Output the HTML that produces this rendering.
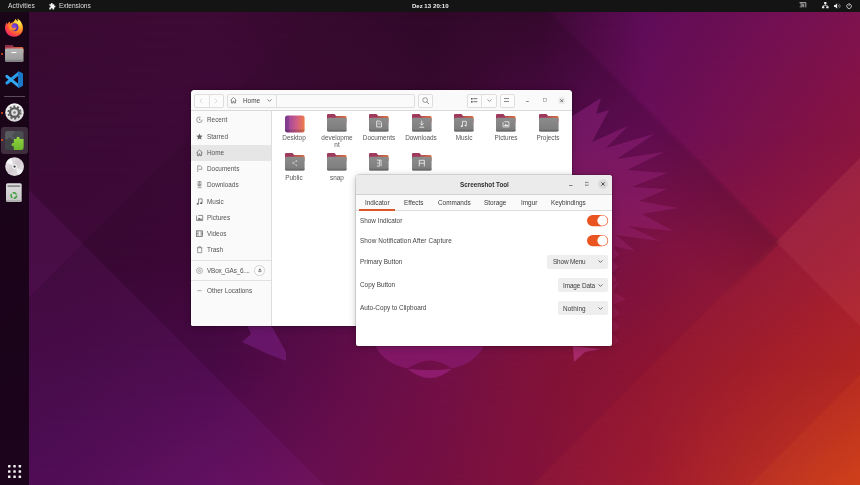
<!DOCTYPE html>
<html lang="en">
<head>
<meta charset="utf-8">
<title>Ubuntu Desktop - Screenshot Tool</title>
<style>
*{box-sizing:border-box;margin:0;padding:0}
html,body{width:860px;height:485px;overflow:hidden;background:#3b0a33}
body{position:relative;font-family:"Liberation Sans","DejaVu Sans",sans-serif;font-size:6.4px;color:#4a4a4a}
#wall{position:absolute;left:0;top:0;width:860px;height:485px}
.t{position:absolute;white-space:nowrap;line-height:8px;height:8px;will-change:transform;margin-top:.5px}
svg{display:block;position:absolute;overflow:visible}
/* top bar */
#topbar{position:absolute;left:0;top:0;width:860px;height:12px;background:#141414;color:#dcdcdc;font-size:6.6px}
/* dock */
#dock{position:absolute;left:0;top:12px;width:29px;height:473px;background:rgba(20,3,20,.88)}
.dot{position:absolute;left:1px;width:2px;height:2px;border-radius:50%;background:#e95420}
/* windows */
.win{position:absolute;background:#fff;border-radius:4px 4px 2px 2px;box-shadow:0 0 0 .5px rgba(0,0,0,.22),0 1px 7px rgba(0,0,0,.26);overflow:hidden}
#files{left:191px;top:90px;width:381px;height:236px}
#shot{left:356px;top:175px;width:256px;height:171px;background:#fff;border-radius:3px 3px 2px 2px}
.hb{position:absolute;left:0;top:0;right:0;background:#fafafa;border-bottom:.6px solid #dadada}
.btn{position:absolute;top:3.5px;height:14px;border:.6px solid #dedede;border-radius:2px;background:#fcfcfc}
.side{position:absolute;left:0;top:21px;width:81px;bottom:0;background:#fafafa;border-right:.6px solid #dedede}
.si{left:16.3px;color:#545454}
.lbl{will-change:transform;margin-top:.5px;position:absolute;width:42px;text-align:center;line-height:7px;color:#565656;font-size:6.4px}
.combo{position:absolute;height:14px;background:#eeeeee;border-radius:2px}
.sw{position:absolute;left:231px;width:21px;height:12px;border-radius:6px;background:#e95420}
.sw i{position:absolute;right:1px;top:1px;width:10px;height:10px;border-radius:50%;background:#fff;box-shadow:0 0 .5px rgba(0,0,0,.4)}
</style>
</head>
<body>
<svg id="wall" viewBox="0 0 860 485">
<defs>
<linearGradient id="r0" x1="0" y1="0" x2="860" y2="0" gradientUnits="userSpaceOnUse">
<stop offset="0.0000" stop-color="#3a0a32"/>
<stop offset="0.2500" stop-color="#3d0a35"/>
<stop offset="0.5000" stop-color="#300828"/>
<stop offset="0.6279" stop-color="#3a0931"/>
<stop offset="0.7500" stop-color="#5f0c58"/>
<stop offset="1.0000" stop-color="#7e1250"/>
</linearGradient>
<linearGradient id="r1" x1="0" y1="0" x2="860" y2="0" gradientUnits="userSpaceOnUse">
<stop offset="0.0000" stop-color="#3a0a34"/>
<stop offset="0.2500" stop-color="#3e0a38"/>
<stop offset="0.5000" stop-color="#38092f"/>
<stop offset="0.6279" stop-color="#480a42"/>
<stop offset="0.7500" stop-color="#6a0e58"/>
<stop offset="1.0000" stop-color="#88143f"/>
</linearGradient>
<linearGradient id="v1" x1="0" y1="12" x2="0" y2="135" gradientUnits="userSpaceOnUse"><stop offset="0" stop-color="#000"/><stop offset="1" stop-color="#fff"/></linearGradient>
<mask id="m1" maskUnits="userSpaceOnUse" x="0" y="0" width="860" height="485"><rect width="860" height="485" fill="url(#v1)"/></mask>
<linearGradient id="r2" x1="0" y1="0" x2="860" y2="0" gradientUnits="userSpaceOnUse">
<stop offset="0.0000" stop-color="#3d0938"/>
<stop offset="0.2500" stop-color="#400939"/>
<stop offset="0.5000" stop-color="#600d54"/>
<stop offset="0.6279" stop-color="#6e0f4c"/>
<stop offset="0.7500" stop-color="#7d1240"/>
<stop offset="1.0000" stop-color="#9c1a35"/>
</linearGradient>
<linearGradient id="v2" x1="0" y1="135" x2="0" y2="255" gradientUnits="userSpaceOnUse"><stop offset="0" stop-color="#000"/><stop offset="1" stop-color="#fff"/></linearGradient>
<mask id="m2" maskUnits="userSpaceOnUse" x="0" y="0" width="860" height="485"><rect width="860" height="485" fill="url(#v2)"/></mask>
<linearGradient id="r3" x1="0" y1="0" x2="860" y2="0" gradientUnits="userSpaceOnUse">
<stop offset="0.0000" stop-color="#440a46"/>
<stop offset="0.2500" stop-color="#4c0a4a"/>
<stop offset="0.5000" stop-color="#700f48"/>
<stop offset="0.6279" stop-color="#801238"/>
<stop offset="0.7500" stop-color="#8c1432"/>
<stop offset="1.0000" stop-color="#ac2222"/>
</linearGradient>
<linearGradient id="v3" x1="0" y1="255" x2="0" y2="365" gradientUnits="userSpaceOnUse"><stop offset="0" stop-color="#000"/><stop offset="1" stop-color="#fff"/></linearGradient>
<mask id="m3" maskUnits="userSpaceOnUse" x="0" y="0" width="860" height="485"><rect width="860" height="485" fill="url(#v3)"/></mask>
<linearGradient id="r4" x1="0" y1="0" x2="860" y2="0" gradientUnits="userSpaceOnUse">
<stop offset="0.0000" stop-color="#4e0b56"/>
<stop offset="0.2500" stop-color="#620e60"/>
<stop offset="0.5000" stop-color="#740f42"/>
<stop offset="0.6279" stop-color="#84123a"/>
<stop offset="0.7500" stop-color="#981730"/>
<stop offset="1.0000" stop-color="#c93a18"/>
</linearGradient>
<linearGradient id="v4" x1="0" y1="365" x2="0" y2="485" gradientUnits="userSpaceOnUse"><stop offset="0" stop-color="#000"/><stop offset="1" stop-color="#fff"/></linearGradient>
<mask id="m4" maskUnits="userSpaceOnUse" x="0" y="0" width="860" height="485"><rect width="860" height="485" fill="url(#v4)"/></mask>
</defs>
<rect width="860" height="485" fill="url(#r0)"/>
<rect width="860" height="485" fill="url(#r1)" mask="url(#m1)"/>
<rect width="860" height="485" fill="url(#r2)" mask="url(#m2)"/>
<rect width="860" height="485" fill="url(#r3)" mask="url(#m3)"/>
<rect width="860" height="485" fill="url(#r4)" mask="url(#m4)"/>
<!-- facets -->
<polygon points="0,161 324,485 0,485" fill="#9a30b0" opacity=".12"/>
<linearGradient id="fx" x1="60" y1="0" x2="380" y2="0" gradientUnits="userSpaceOnUse"><stop offset="0" stop-color="#12000f" stop-opacity=".14"/><stop offset="1" stop-color="#12000f" stop-opacity="0"/></linearGradient>
<polygon points="0,326 314,12 400,12 400,485 0,485" fill="url(#fx)"/>
<linearGradient id="sh1" x1="659" y1="115" x2="599" y2="175" gradientUnits="userSpaceOnUse"><stop offset="0" stop-color="#1a0018" stop-opacity="0"/><stop offset=".09" stop-color="#1a0018" stop-opacity=".17"/><stop offset=".5" stop-color="#1a0018" stop-opacity=".08"/><stop offset="1" stop-color="#1a0018" stop-opacity="0"/></linearGradient>
<polygon points="551,12 781,242 706,317 441,52 441,12" fill="url(#sh1)"/>
<polygon points="776,242 860,158 860,326" fill="#ff7a6a" opacity=".13"/>
<polygon points="533,485 776,242 860,326 860,485" fill="#ff5a3a" opacity=".055"/>
<polygon points="750,485 860,375 860,485" fill="#ff7a2a" opacity=".08"/>
<!-- mane right -->
<linearGradient id="mg" x1="0" y1="100" x2="0" y2="350" gradientUnits="userSpaceOnUse"><stop offset="0" stop-color="#8a1f7c" stop-opacity=".56"/><stop offset=".55" stop-color="#96206c" stop-opacity=".5"/><stop offset="1" stop-color="#a8265a" stop-opacity=".28"/></linearGradient>
<g fill="url(#mg)">
<polygon points="560,124 601,98 596,114 609,110 592,142 628,126 606,148 654,134 617,159 664,152 627,170 667,173 632,187 667,189 639,201 678,208 642,214 673,231 628,226 660,241 616,235 635,251 613,246 619,255 612,260 618,267 612,273 617,280 612,285 619,282 613,292 626,299 613,305 620,314 612,319 620,327 612,333 619,341 612,346 560,346"/>
<polygon points="573,346 601,349 585,352 574,362" fill="#b03078" opacity=".75"/>
<polygon points="247,325 271,325 286,352 286,361 268,354 242,342 251,334" fill="#8a259a" opacity=".42"/>
</g>
<!-- chin -->
<path d="M375.800,346.500V330H483.700V346.500C478,358 465,366 452,368.500Q441,361 430,360.500Q419,361 407.500,368.500C394,366 381,358 375.800,346.500Z" fill="#8a1b70" opacity=".72"/>
<path d="M407.400,368.800Q430,371.500 452,368.800Q430,387.200 407.400,368.800Z" fill="#941d76" opacity=".85"/>

</svg>

<div id="topbar">
<span class="t" style="left:7.5px;top:1.5px;letter-spacing:.1px">Activities</span>
<svg style="left:49.400px;top:2.600px" width="7.400" height="6.500" viewBox="0 0 14 12.4"><path fill="#f2f2f2" d="M5.2 0a1.7 1.7 0 0 1 1.6 2.2h3v3a1.8 1.8 0 1 1 0 3.4v3.8H6.9a1.8 1.8 0 1 0-3.4 0H.6V8.4a1.7 1.7 0 1 0 0-3.2V2.2h3A1.7 1.7 0 0 1 5.2 0z"/></svg>
<span class="t" style="left:58.8px;top:1.5px;letter-spacing:-.06px">Extensions</span>
<span class="t" style="left:411.6px;top:1.5px;font-weight:700;color:#f0f0f0;font-size:6px">Dez 13</span><span class="t" style="left:433.3px;top:1.5px;font-weight:700;color:#f0f0f0;font-size:6.1px">20:10</span>
<!-- tray -->
<svg style="left:799px;top:2.4px" width="7.400" height="5.500" viewBox="0 0 15 11"><g fill="none" stroke="#e2e2e2" stroke-width="1.500"><path d="M1 1.200H13.800V10.800M9.600 3.400V10.800"/><path d="M2.500 3.600H6.600V6.600H3.200M6.600 6.600V9.800H1.500" stroke-width="1.300"/></g></svg>
<svg style="left:821.5px;top:2.4px" width="6.6" height="6.4" viewBox="0 0 13 12.6"><g fill="#efefef"><rect x="4.2" y="0" width="4.6" height="4.2" rx=".6"/><rect x="0" y="8.2" width="4.6" height="4.2" rx=".6"/><rect x="8.4" y="8.2" width="4.6" height="4.2" rx=".6"/><path d="M5.9 4h1.2v2.2h4v2.2H9.9V7.4H3.1v1H1.9V6.2h4z"/></g></svg>
<svg style="left:833.8px;top:2.6px" width="6.6" height="6" viewBox="0 0 13 12"><path fill="#efefef" d="M0 4h2.6L6.2.6v10.8L2.6 8H0z"/><path fill="none" stroke="#9a9a9a" stroke-width="1.3" d="M8.4 3.4a3.6 3.6 0 0 1 0 5.2M10.4 1.6a6.2 6.2 0 0 1 0 8.8"/></svg>
<svg style="left:846px;top:2.5px" width="6.2" height="6.2" viewBox="0 0 12 12"><path fill="none" stroke="#ededed" stroke-width="1.5" stroke-linecap="round" d="M3.6 2.2a4.6 4.6 0 1 0 4.8 0M6 .8v4.4"/></svg>
</div>

<div id="dock">
<!-- coordinates relative to dock (top:12px) -->
<!-- firefox -->
<svg style="left:4.700px;top:5.800px" width="18.200" height="18.800" viewBox="0 0 36.400 37.600">
<defs>
<radialGradient id="ffo" cx=".78" cy=".18" r="1"><stop offset="0" stop-color="#fff05a"/><stop offset=".3" stop-color="#ffb82a"/><stop offset=".55" stop-color="#ff7a28"/><stop offset=".78" stop-color="#ff3d48"/><stop offset="1" stop-color="#d82878"/></radialGradient>
<radialGradient id="ffp" cx=".45" cy=".45" r=".6"><stop offset="0" stop-color="#8a54f0"/><stop offset="1" stop-color="#4a22a8"/></radialGradient>
</defs>
<path fill="url(#ffo)" d="M21 1.500c1 2.500 3 3.500 5 5.500-.2-2.200-.6-4-1.500-6 5.500 3 9 8 10.500 13 1.500 5 1.300 9.500-.5 13.500-3 6.500-9.500 10-16.500 10C8 37.500 0 29.500 0 20c0-4.500 1.500-8.500 4-11.500-.1 1.500.1 3 .6 4.200C5.800 10 7.800 8 10 7c-.5 1.500-.5 3 0 4.500 1.500-1.500 3.500-2.400 5.500-2.500 2.500-2 4.500-4.500 5.500-7.500z"/>
<circle cx="19" cy="18.500" r="7.800" fill="url(#ffp)"/>
<path fill="#ff8a2a" d="M8.500 14c2.500-2.500 6-3 8.500-1.800-2 .4-3.400 1.800-3.400 3.800 0 2.500 2 4.300 4.600 4.300 2.300 0 4-1.300 4.600-3.300.8 4.200-2.500 8.500-7.500 8.500-5.500 0-9-5.500-7.300-11.500z" opacity=".92"/>
</svg>
<!-- files -->
<div class="dot" style="top:40.5px"></div>
<svg style="left:4.800px;top:32.800px" width="18.500" height="16.800" viewBox="0 0 39.2 35.2">
<defs><linearGradient id="dfb" x1="0" y1="0" x2="0" y2="1"><stop offset="0" stop-color="#b4b4b4"/><stop offset="1" stop-color="#9a9a9a"/></linearGradient>
<linearGradient id="dft" x1="0" y1="0" x2="1" y2="0"><stop offset="0" stop-color="#a83a56"/><stop offset="1" stop-color="#e0683a"/></linearGradient></defs>
<path fill="url(#dft)" d="M3 0h12l4 4h17a3 3 0 0 1 3 3v10H0V3a3 3 0 0 1 3-3z"/>
<path fill="#8e2e4e" d="M3 0h12l3 4H0V3a3 3 0 0 1 3-3z"/>
<rect x="0" y="7" width="39.2" height="28.2" rx="3" fill="url(#dfb)"/>
<rect x="0" y="31" width="39.2" height="4.2" rx="2" fill="#858585"/>
<rect x="13.500" y="14.500" width="11" height="2.200" rx="1.100" fill="#fff"/>
</svg>
<!-- vscode -->
<svg style="left:4.700px;top:59.300px" width="18" height="17.300" viewBox="0 0 38 36">
<path d="M28.500 5L4 25" stroke="#2a9cea" stroke-width="6.400" stroke-linecap="round"/>
<path d="M28.500 31L4 11" stroke="#33a9f2" stroke-width="6.400" stroke-linecap="round"/>
<path fill="#1b79c9" d="M27.500 0l9 4.200a2.500 2.500 0 0 1 1.500 2.300v23a2.500 2.500 0 0 1-1.500 2.300l-9 4.200z"/>
</svg>
<!-- separator -->
<div style="position:absolute;left:4px;top:83.600px;width:20.500px;height:.7px;background:#5a4a5c"></div>
<!-- settings -->
<div class="dot" style="top:99.900px"></div>
<svg style="left:4.700px;top:91.400px" width="19" height="19" viewBox="0 0 38 38">
<defs><linearGradient id="sgb" x1="0" y1="0" x2="0" y2="1"><stop offset="0" stop-color="#f6f6f6"/><stop offset="1" stop-color="#d6d6d6"/></linearGradient></defs>
<circle cx="19" cy="19" r="18.600" fill="url(#sgb)"/>
<circle cx="19" cy="19" r="12.600" fill="none" stroke="#5c5c5c" stroke-width="3" stroke-dasharray="4.200 3.716"/>
<circle cx="19" cy="19" r="11.200" fill="#5c5c5c"/>
<circle cx="19" cy="19" r="6.600" fill="#dedede"/>
<circle cx="19" cy="19" r="2.700" fill="#7a7a7a"/>
</svg>
<!-- extensions (active) -->
<div style="position:absolute;left:1.100px;top:114.600px;width:26.500px;height:27.200px;border-radius:3px;background:rgba(255,255,255,.17)"></div>
<div class="dot" style="top:126.800px"></div>
<svg style="left:5.100px;top:118.600px" width="18.800" height="19" viewBox="0 0 36.400 37.600">
<defs><linearGradient id="exg" x1="0" y1="0" x2="0" y2="1"><stop offset="0" stop-color="#93d440"/><stop offset="1" stop-color="#6cb52c"/></linearGradient></defs>
<rect x="0" y="0" width="36.400" height="37.600" rx="4.500" fill="#4a4d51"/>
<path fill="#585b5f" d="M0 4.500A4.500 4.500 0 0 1 4.500 0H18v6a3.200 3.200 0 1 0 0 6v5H0z"/>
<path fill="#404346" d="M0 17h6a3.200 3.200 0 1 1 6 0h5v20.600H4.500A4.500 4.500 0 0 1 0 33.100z"/>
<path fill="url(#exg)" d="M17 16h5.300a3.400 3.400 0 1 1 6.400 0h7.700v17.100a4.500 4.500 0 0 1-4.500 4.500H17v-7.400a3.400 3.400 0 1 1 0-6.400z"/>
</svg>
<!-- disc -->
<svg style="left:4.500px;top:144.500px" width="19.200" height="19.200" viewBox="0 0 38 38">
<defs><linearGradient id="cdg" x1="0" y1="0" x2="1" y2="1"><stop offset="0" stop-color="#f4f2f4"/><stop offset=".5" stop-color="#d2ccd0"/><stop offset="1" stop-color="#ece8ec"/></linearGradient></defs>
<circle cx="19" cy="19" r="18.600" fill="url(#cdg)"/>
<path d="M19 19L2.500 11A18.600 18.600 0 0 1 11 2.200z" fill="#fff" opacity=".75"/>
<path d="M19 19l16.500 8a18.600 18.600 0 0 1-8.500 8.800z" fill="#fff" opacity=".55"/>
<circle cx="19" cy="19" r="5.600" fill="#f4f4f4" stroke="#c0bcc0" stroke-width=".8"/>
<circle cx="19" cy="19" r="2.300" fill="#3a3a3a"/>
</svg>
<!-- trash -->
<svg style="left:6.200px;top:170.800px" width="15.700" height="19.200" viewBox="0 0 32 38">
<defs><linearGradient id="trg" x1="0" y1="0" x2="0" y2="1"><stop offset="0" stop-color="#dedede"/><stop offset="1" stop-color="#c6c6c6"/></linearGradient></defs>
<rect x="0" y="0" width="32" height="38" rx="3.200" fill="url(#trg)"/>
<rect x="3" y="3.800" width="26" height="3.800" rx=".8" fill="#8c8c8c"/>
<path d="M0 34h32v.8a3.200 3.200 0 0 1-3.200 3.200H3.200A3.200 3.200 0 0 1 0 34.800z" fill="#b0b0b0"/>
<circle cx="16" cy="25" r="5.600" fill="none" stroke="#3a9e3a" stroke-width="3" stroke-dasharray="8.700 3"/>
<circle cx="16" cy="25" r="2.600" fill="#d2d2d2"/>
</svg>
<!-- show apps -->
<svg style="left:7.700px;top:453.100px" width="13.200" height="13.200" viewBox="0 0 13.200 13.200"><g fill="#f4f4f4">
<rect x="0" y="0" width="2.500" height="2.500" rx=".4"/><rect x="5.300" y="0" width="2.500" height="2.500" rx=".4"/><rect x="10.600" y="0" width="2.500" height="2.500" rx=".4"/>
<rect x="0" y="5.300" width="2.500" height="2.500" rx=".4"/><rect x="5.300" y="5.300" width="2.500" height="2.500" rx=".4"/><rect x="10.600" y="5.300" width="2.500" height="2.500" rx=".4"/>
<rect x="0" y="10.600" width="2.500" height="2.500" rx=".4"/><rect x="5.300" y="10.600" width="2.500" height="2.500" rx=".4"/><rect x="10.600" y="10.600" width="2.500" height="2.500" rx=".4"/>
</g></svg>

</div>

<div class="win" id="files">
<div class="hb" style="height:21px"></div>
<div class="btn" style="left:3px;width:30px"></div>
<div style="position:absolute;left:17.700px;top:3.500px;width:.6px;height:14px;background:#e0e0e0"></div>
<svg style="left:8px;top:7.500px" width="4" height="6" viewBox="0 0 4 6"><path d="M3.200 .6L.9 3l2.300 2.400" fill="none" stroke="#cfcfcf" stroke-width=".8"/></svg>
<svg style="left:23px;top:7.500px" width="4" height="6" viewBox="0 0 4 6"><path d="M.8 .6L3.100 3 .8 5.400" fill="none" stroke="#cfcfcf" stroke-width=".8"/></svg>
<div class="btn" style="left:36px;width:187.500px;background:#fafafa"></div>
<div style="position:absolute;left:85px;top:3.500px;width:.6px;height:14px;background:#e0e0e0"></div>
<svg style="left:39px;top:7px" width="7" height="6.500" viewBox="0 0 14 13"><path d="M1 6.500L7 1l6 5.500M3 5.500V12h3V8.500h2V12h3V5.500" fill="none" stroke="#5a5a5a" stroke-width="1.300" stroke-linejoin="round"/></svg>
<span class="t" style="left:52.300px;top:6.300px;color:#454545">Home</span>
<svg style="left:75.500px;top:9px" width="5" height="3" viewBox="0 0 5 3"><path d="M.5 .4L2.500 2.400 4.500 .4" fill="none" stroke="#6a6a6a" stroke-width=".8"/></svg>
<div class="btn" style="left:227px;width:15px"></div>
<svg style="left:230.800px;top:6.800px" width="7.400" height="7.400" viewBox="0 0 12.800 12.800"><circle cx="5.400" cy="5.400" r="4.100" fill="none" stroke="#6a6a6a" stroke-width="1.150"/><path d="M8.400 8.400l3.400 3.400" stroke="#6a6a6a" stroke-width="1.400" stroke-linecap="round"/></svg>
<div class="btn" style="left:275.700px;width:30px"></div>
<div style="position:absolute;left:290.400px;top:3.500px;width:.6px;height:14px;background:#e0e0e0"></div>
<svg style="left:279.800px;top:7.700px" width="6.400" height="5.400" viewBox="0 0 12.800 10.800"><g fill="#5c5c5c"><rect x="0" y="0" width="3.200" height="3.200"/><rect x="0" y="6" width="3.200" height="3.200"/><rect x="4.600" y=".6" width="8.200" height="1.700"/><rect x="4.600" y="6.600" width="8.200" height="1.700"/></g></svg>
<svg style="left:295.500px;top:9px" width="5" height="3" viewBox="0 0 5 3"><path d="M.5 .4L2.500 2.400 4.500 .4" fill="none" stroke="#7a7a7a" stroke-width=".8"/></svg>
<div class="btn" style="left:308.500px;width:15px"></div>
<svg style="left:313.400px;top:8.100px" width="5" height="5" viewBox="0 0 5 5"><g fill="#636363"><rect x="0" y=".3" width="5" height=".75"/><rect x="0" y="3.100" width="5" height=".75"/></g></svg>
<svg style="left:335.200px;top:11px" width="2.800" height=".9" viewBox="0 0 2.800 .9"><rect width="2.800" height=".8" fill="#727272"/></svg>
<svg style="left:351.900px;top:8.200px" width="3.600" height="3.600" viewBox="0 0 3.600 3.600"><rect x=".3" y=".3" width="3" height="3" fill="none" stroke="#8e8e8e" stroke-width=".55"/></svg>
<div style="position:absolute;left:366.900px;top:6.600px;width:7.400px;height:7.400px;border-radius:50%;background:#ebebeb"></div>
<svg style="left:368.900px;top:8.600px" width="3.400" height="3.400" viewBox="0 0 3.400 3.400"><path d="M.3 .3l2.800 2.800M3.100 .3L.3 3.100" stroke="#4a4a4a" stroke-width=".75"/></svg>
<div class="side"></div>
<div style="position:absolute;left:0;top:54.500px;width:80.400px;height:16px;background:#e6e6e6"></div>
<svg style="left:5.100px;top:26.30px" width="7.300" height="7.300" viewBox="0 0 12.600 12.600"><circle cx="6" cy="6.500" r="4.800" fill="none" stroke="#666" stroke-width="1.100" stroke-dasharray="24 6"/><path d="M6 4v2.800h2.200" fill="none" stroke="#666" stroke-width="1"/></svg>
<span class="t si" style="top:25.90px">Recent</span>
<svg style="left:5.100px;top:42.55px" width="7.300" height="7.300" viewBox="0 0 12.600 12.600"><path d="M6 .8l1.600 3.600 3.900.4-2.900 2.600.8 3.900L6 9.300 2.600 11.300l.8-3.900L.5 4.800l3.900-.4z" fill="#6a6a6a"/></svg>
<span class="t si" style="top:42.15px">Starred</span>
<svg style="left:5.100px;top:58.80px" width="7.300" height="7.300" viewBox="0 0 12.600 12.600"><path d="M.8 6.500L6 1.500l5.200 5M2.500 5.500V11.500h2.700V8.300h1.600v3.200h2.700V5.500" fill="none" stroke="#555" stroke-width="1.150" stroke-linejoin="round"/></svg>
<span class="t si" style="top:58.40px">Home</span>
<svg style="left:5.100px;top:75.05px" width="7.300" height="7.300" viewBox="0 0 12.600 12.600"><path d="M3 12V1.500h4.500l2.500 2.300v3.700H5" fill="none" stroke="#666" stroke-width="1.100"/></svg>
<span class="t si" style="top:74.65px">Documents</span>
<svg style="left:5.100px;top:91.30px" width="7.300" height="7.300" viewBox="0 0 12.600 12.600"><path d="M6 1v7M3.500 5.500L6 8.200l2.500-2.700M3.500 1h5v7.500h-5zM2.500 11.500h7" fill="none" stroke="#666" stroke-width="1.050"/></svg>
<span class="t si" style="top:90.90px">Downloads</span>
<svg style="left:5.100px;top:107.55px" width="7.300" height="7.300" viewBox="0 0 12.600 12.600"><path d="M4.500 9.500V1.500h6v7" fill="none" stroke="#555" stroke-width="1.150"/><ellipse cx="3" cy="10" rx="1.900" ry="1.500" fill="#555"/><ellipse cx="9" cy="9" rx="1.900" ry="1.500" fill="#555"/></svg>
<span class="t si" style="top:107.15px">Music</span>
<svg style="left:5.100px;top:123.80px" width="7.300" height="7.300" viewBox="0 0 12.600 12.600"><path d="M1 11.300V2.500M1 11.300h10.500V2.500H4" fill="none" stroke="#5a5a5a" stroke-width="1.150"/><path d="M2.500 10l2.800-4 2.200 2.600 1.300-1.200 2 2.600z" fill="#5a5a5a"/></svg>
<span class="t si" style="top:123.40px">Pictures</span>
<svg style="left:5.100px;top:140.05px" width="7.300" height="7.300" viewBox="0 0 12.600 12.600"><rect x="1" y="1.500" width="10.500" height="9.500" fill="none" stroke="#555" stroke-width="1.150"/><path d="M3.600 1.500v9.500M8.900 1.500v9.500M1 6.200h2.600M8.900 6.200h2.600" stroke="#555" stroke-width="1"/></svg>
<span class="t si" style="top:139.65px">Videos</span>
<svg style="left:5.100px;top:156.30px" width="7.300" height="7.300" viewBox="0 0 12.600 12.600"><path d="M1.500 3h9.500M4.500 3V1.300h3.500V3M2.800 3.300v8.200h7V3.300" fill="none" stroke="#666" stroke-width="1.100"/></svg>
<span class="t si" style="top:155.90px">Trash</span>
<svg style="left:5.100px;top:176.80px" width="7.300" height="7.300" viewBox="0 0 12.600 12.600"><circle cx="6" cy="6.300" r="5" fill="none" stroke="#777" stroke-width="1"/><circle cx="6" cy="6.300" r="1.700" fill="none" stroke="#777" stroke-width="1"/></svg>
<span class="t si" style="top:176.40px;letter-spacing:-.2px">VBox_GAs_6....</span>
<svg style="left:5.100px;top:196.80px" width="7.300" height="7.300" viewBox="0 0 12.600 12.600"><path d="M2.500 6.300h7" stroke="#7a7a7a" stroke-width="1.100"/></svg>
<span class="t si" style="top:196.40px">Other Locations</span>
<div style="position:absolute;left:0;top:169.700px;width:80.400px;height:.6px;background:#e2e2e2"></div>
<div style="position:absolute;left:0;top:189.700px;width:80.400px;height:.6px;background:#e2e2e2"></div>
<div style="position:absolute;left:63.200px;top:175.200px;width:10.600px;height:10.600px;border-radius:50%;border:.6px solid #d2d2d2;background:#fcfcfc"></div>
<svg style="left:66.600px;top:178.200px" width="3.800" height="4.400" viewBox="0 0 3.800 4.400"><path d="M1.900 .3L3.500 2.600H.3z" fill="#6a6a6a"/><rect x=".3" y="3.300" width="3.200" height=".8" fill="#6a6a6a"/></svg>
<svg width="0" height="0" style="left:0;top:0"><defs><linearGradient id="fb" x1="0" y1="0" x2="0" y2="1"><stop offset="0" stop-color="#8c8c8c"/><stop offset="1" stop-color="#7c7c7c"/></linearGradient><linearGradient id="ft" x1="0" y1="0" x2="1" y2="0"><stop offset="0" stop-color="#a03a5c"/><stop offset=".45" stop-color="#b44e50"/><stop offset="1" stop-color="#de6a3a"/></linearGradient><linearGradient id="dk" x1="0" y1="0" x2="1" y2="0"><stop offset="0" stop-color="#7d3a8c"/><stop offset=".22" stop-color="#8c3f90"/><stop offset=".23" stop-color="#a64a98"/><stop offset=".6" stop-color="#d05e84"/><stop offset="1" stop-color="#ee7a4a"/></linearGradient><g id="fold"><path fill="url(#ft)" d="M3 0h11.500l3.500 3.800h18.200a3 3 0 0 1 3 3V16H0V3a3 3 0 0 1 3-3z"/><path fill="#a03a5c" d="M3 0h11.500l3 3.800V8H0V3a3 3 0 0 1 3-3z"/><rect x="0" y="7.600" width="39.200" height="27.400" rx="3" fill="url(#fb)"/><path d="M0 31.500h39.200V32a3 3 0 0 1-3 3H3a3 3 0 0 1-3-3z" fill="#6c6c6c"/></g></defs></svg>
<svg style="left:93.50px;top:24.70px" width="19.600" height="17.500" viewBox="0 0 39.200 35"><rect x="0" y="1" width="39.200" height="34" rx="5" fill="url(#dk)"/><path d="M0 29h39.200v1a5 5 0 0 1-5 5H5a5 5 0 0 1-5-5z" fill="#000" opacity=".14"/></svg>
<div class="lbl t2" style="left:82.30px;top:43.70px">Desktop</div>
<svg style="left:135.90px;top:24.00px" width="19.600" height="17.500" viewBox="0 0 39.200 35"><use href="#fold"/><g transform="translate(19.600 20.500) scale(.84) translate(-19.600 -20.500)" opacity=".88"></g></svg>
<div class="lbl t2" style="left:124.70px;top:43.70px">developme<br>nt</div>
<svg style="left:178.20px;top:24.00px" width="19.600" height="17.500" viewBox="0 0 39.200 35"><use href="#fold"/><g transform="translate(19.600 20.500) scale(.84) translate(-19.600 -20.500)" opacity=".88"><path d="M14.500 13h8l3.500 3.500V27h-11.500z" fill="none" stroke="#fff" stroke-width="2"/><path d="M17 19.500h6.500" stroke="#fff" stroke-width="1.800"/></g></svg>
<div class="lbl t2" style="left:167.00px;top:43.70px">Documents</div>
<svg style="left:220.50px;top:24.00px" width="19.600" height="17.500" viewBox="0 0 39.200 35"><use href="#fold"/><g transform="translate(19.600 20.500) scale(.84) translate(-19.600 -20.500)" opacity=".88"><path d="M19.600 12v10M15.500 18.500l4.100 4.200 4.100-4.200M14 27.500h11.200" fill="none" stroke="#fff" stroke-width="2.100"/></g></svg>
<div class="lbl t2" style="left:209.30px;top:43.70px">Downloads</div>
<svg style="left:262.90px;top:24.00px" width="19.600" height="17.500" viewBox="0 0 39.200 35"><use href="#fold"/><g transform="translate(19.600 20.500) scale(.84) translate(-19.600 -20.500)" opacity=".88"><path d="M16.500 24.500V13.500h9v9.500" fill="none" stroke="#fff" stroke-width="2"/><ellipse cx="14.800" cy="25" rx="2.500" ry="2" fill="#fff"/><ellipse cx="23.800" cy="23.500" rx="2.500" ry="2" fill="#fff"/></g></svg>
<div class="lbl t2" style="left:251.70px;top:43.70px">Music</div>
<svg style="left:305.20px;top:24.00px" width="19.600" height="17.500" viewBox="0 0 39.200 35"><use href="#fold"/><g transform="translate(19.600 20.500) scale(.84) translate(-19.600 -20.500)" opacity=".88"><path d="M13 15.500v11.300h14V14.500H16" fill="none" stroke="#fff" stroke-width="1.900"/><path d="M15.500 24.500l3.800-5 3 3.400 1.500-1.400 2.400 3z" fill="#fff"/></g></svg>
<div class="lbl t2" style="left:294.00px;top:43.70px">Pictures</div>
<svg style="left:347.50px;top:24.00px" width="19.600" height="17.500" viewBox="0 0 39.200 35"><use href="#fold"/><g transform="translate(19.600 20.500) scale(.84) translate(-19.600 -20.500)" opacity=".88"></g></svg>
<div class="lbl t2" style="left:336.30px;top:43.70px">Projects</div>
<svg style="left:93.50px;top:63.40px" width="19.600" height="17.500" viewBox="0 0 39.200 35"><use href="#fold"/><g transform="translate(19.600 20.500) scale(.84) translate(-19.600 -20.500)" opacity=".88"><g opacity=".8"><circle cx="23.500" cy="15" r="1.700" fill="#fff"/><circle cx="15.500" cy="20" r="1.700" fill="#fff"/><circle cx="23.500" cy="25.500" r="1.700" fill="#fff"/><path d="M23.500 15L15.500 20l8 5.500" fill="none" stroke="#fff" stroke-width="1.050"/></g></g></svg>
<div class="lbl t2" style="left:82.30px;top:83.90px">Public</div>
<svg style="left:135.90px;top:63.40px" width="19.600" height="17.500" viewBox="0 0 39.200 35"><use href="#fold"/><g transform="translate(19.600 20.500) scale(.84) translate(-19.600 -20.500)" opacity=".88"></g></svg>
<div class="lbl t2" style="left:124.70px;top:83.90px">snap</div>
<svg style="left:178.20px;top:63.40px" width="19.600" height="17.500" viewBox="0 0 39.200 35"><use href="#fold"/><g transform="translate(19.600 20.500) scale(.84) translate(-19.600 -20.500)" opacity=".88"><path d="M15 13h10v14.500M21 13v14.500M15 27.500h6" fill="none" stroke="#fff" stroke-width="1.900"/><path d="M15.500 18l3.500 2.200-3.500 2.200" fill="none" stroke="#fff" stroke-width="1.300"/></g></svg>
<svg style="left:220.50px;top:63.40px" width="19.600" height="17.500" viewBox="0 0 39.200 35"><use href="#fold"/><g transform="translate(19.600 20.500) scale(.84) translate(-19.600 -20.500)" opacity=".88"><path d="M13.500 28V13.500h12.200V28M13.500 20.500h12.200" fill="none" stroke="#fff" stroke-width="2"/></g></svg>
</div>

<div class="win" id="shot">
<div class="hb" style="height:19.6px;background:#ebebeb;border-bottom-color:#d0d0d0"></div>
<div style="position:absolute;left:0;top:-1px;width:256px;height:171px">
<span class="t" style="left:103.90px;top:6.20px;font-weight:700;color:#2e2e2e;font-size:6.3px">Screenshot Tool</span>
<svg style="left:213.400px;top:10.950px" width="3.600" height=".9" viewBox="0 0 3.600 .9"><rect width="3.600" height=".8" fill="#666"/></svg>
<svg style="left:228.900px;top:8.300px" width="3.400" height="3.600" viewBox="0 0 3.400 3.600"><rect x=".3" y=".3" width="2.800" height="2.900" fill="none" stroke="#b4b4b4" stroke-width=".5"/><path d="M0 .3h3.400M0 3.200h3.400" stroke="#686868" stroke-width=".7"/></svg>
<svg style="left:241.600px;top:5.300px" width="10" height="10" viewBox="0 0 10 10"><circle cx="5" cy="5" r="4.900" fill="#dcdcdc"/><path d="M3.350 3.350l3.300 3.300M6.650 3.350l-3.300 3.300" stroke="#2e2e2e" stroke-width=".8"/></svg>
<div style="position:absolute;left:0;top:20.500px;width:256px;height:16.200px;background:#fafafa;border-bottom:.6px solid #dcdcdc"></div>
<span class="t" style="left:8.65px;top:24.40px;color:#3a3a3a">Indicator</span>
<span class="t" style="left:47.70px;top:24.40px;color:#3a3a3a">Effects</span>
<span class="t" style="left:81.90px;top:24.40px;color:#3a3a3a">Commands</span>
<span class="t" style="left:127.60px;top:24.40px;color:#3a3a3a">Storage</span>
<span class="t" style="left:164.70px;top:24.40px;color:#3a3a3a">Imgur</span>
<span class="t" style="left:194.80px;top:24.40px;color:#3a3a3a">Keybindings</span>
<div style="position:absolute;left:3.300px;top:34.700px;width:35.700px;height:2px;background:#d9562a"></div>
<span class="t" style="left:4.400px;top:42.10px;color:#444">Show Indicator</span>
<span class="t" style="left:4.400px;top:62.20px;color:#444;letter-spacing:.1px">Show Notification After Capture</span>
<span class="t" style="left:4.400px;top:83.50px;color:#444">Primary Button</span>
<span class="t" style="left:4.400px;top:106.80px;color:#444">Copy Button</span>
<span class="t" style="left:4.400px;top:129.90px;color:#444">Auto-Copy to Clipboard</span>
<svg style="left:231px;top:41px" width="21.200" height="11.200" viewBox="0 0 21.200 11.200"><rect width="21.200" height="11.200" rx="5.600" fill="#e95420"/><circle cx="15.450" cy="5.600" r="5.050" fill="#fff"/></svg>
<svg style="left:231px;top:60.800px" width="21.200" height="11.200" viewBox="0 0 21.200 11.200"><rect width="21.200" height="11.200" rx="5.600" fill="#e95420"/><circle cx="15.450" cy="5.600" r="5.050" fill="#fff"/></svg>
<div class="combo" style="left:191.20px;top:80.70px;width:60.80px"></div>
<span class="t" style="left:196.50px;top:83.60px;color:#3c3c3c;letter-spacing:-.14px">Show Menu</span>
<svg style="left:241.50px;top:86.40px" width="5" height="3" viewBox="0 0 5 3"><path d="M.5 .4L2.500 2.400 4.500 .4" fill="none" stroke="#555" stroke-width=".8"/></svg>
<div class="combo" style="left:202.00px;top:104.20px;width:50.00px"></div>
<span class="t" style="left:206.90px;top:107.10px;color:#3c3c3c;letter-spacing:-.1px">Image Data</span>
<svg style="left:241.50px;top:109.90px" width="5" height="3" viewBox="0 0 5 3"><path d="M.5 .4L2.500 2.400 4.500 .4" fill="none" stroke="#555" stroke-width=".8"/></svg>
<div class="combo" style="left:202.00px;top:127.20px;width:50.00px"></div>
<span class="t" style="left:206.90px;top:130.10px;color:#3c3c3c;letter-spacing:.1px">Nothing</span>
<svg style="left:241.50px;top:132.90px" width="5" height="3" viewBox="0 0 5 3"><path d="M.5 .4L2.500 2.400 4.500 .4" fill="none" stroke="#555" stroke-width=".8"/></svg>
</div>
</div>
</body>
</html>
